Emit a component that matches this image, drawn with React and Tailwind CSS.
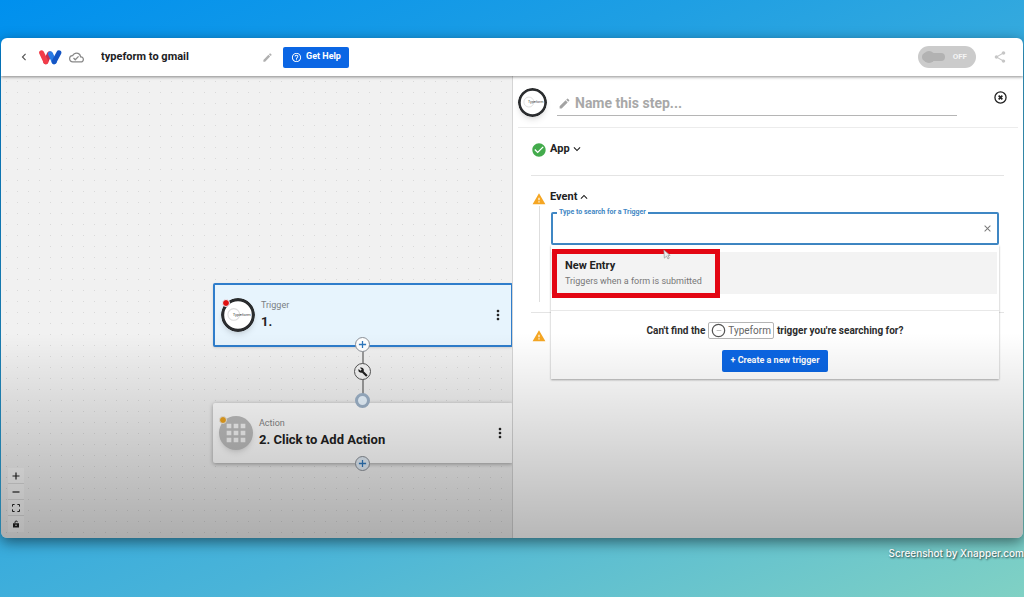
import React, { useState } from "react";
import {
  MdApps,
  MdBuild,
  MdCheckCircle,
  MdClose,
  MdEdit,
  MdHelpOutline,
  MdKeyboardArrowDown,
  MdKeyboardArrowLeft,
  MdKeyboardArrowUp,
  MdMoreVert,
  MdOutlineCloudDone,
  MdShare,
  MdWarning,
} from "react-icons/md";

const Logo = () => (
  <svg viewBox="0 0 44 28" className="h-[15px] w-[23px]" aria-label="Logo" role="img">
    <g fill="none" strokeWidth="9.5" strokeLinecap="round">
      <path d="M13 22L20 7" stroke="#c9304f" />
      <path d="M5 5L13 22" stroke="#f23c49" />
      <path d="M22 7L29 22" stroke="#2a7be4" />
      <path d="M29 22L38 5" stroke="#1455c4" />
    </g>
  </svg>
);

const TypeformMark = ({ className }) => (
  <svg viewBox="0 0 32 32" className={className} aria-hidden="true">
    <circle cx="16" cy="16" r="14.5" fill="#fff" stroke="#2a2c2e" strokeWidth="3" />
    <circle cx="12" cy="15.5" r="5.5" fill="none" stroke="#ddd" strokeWidth="1" />
    <text x="11" y="17" fontSize="4" fontFamily="Roboto, sans-serif" fill="#444">
      Typeform
    </text>
  </svg>
);

const AddHandle = ({ className, label }) => (
  <button
    type="button"
    aria-label={label}
    className={`absolute flex size-[15px] items-center justify-center rounded-full border border-[#8b9097] ${className}`}
  >
    <svg viewBox="0 0 10 10" className="size-[9px]">
      <path d="M5 1v8M1 5h8" stroke="#2f78bd" strokeWidth="1.4" />
    </svg>
  </button>
);

const Header = () => {
  const [title, setTitle] = useState("typeform to gmail");

  return (
    <header className="relative z-20 flex h-[38px] shrink-0 items-center bg-white pr-4 pl-4 shadow-[0_1px_3px_rgba(0,0,0,0.45)]">
      <button type="button" aria-label="Back" className="text-[#555]">
        <MdKeyboardArrowLeft size={14} />
      </button>
      <div className="ml-2">
        <Logo />
      </div>
      <MdOutlineCloudDone size={15} className="ml-[7px] text-[#888]" />
      <input
        type="text"
        aria-label="Workflow name"
        value={title}
        onChange={(e) => setTitle(e.target.value)}
        className="ml-[17px] w-[161px] text-[11px] font-bold text-[#1d1d1f] outline-none"
      />
      <button type="button" aria-label="Rename" className="text-[#b0b0b0]">
        <MdEdit size={11} />
      </button>
      <button
        type="button"
        className="ml-[10px] flex h-[21px] items-center gap-1 rounded-xs bg-[#0b66e4] px-2 text-[9px] font-bold text-white"
      >
        <MdHelpOutline size={11} />
        Get Help
      </button>

      <button
        type="button"
        role="switch"
        aria-checked="false"
        className="ml-auto flex h-[22px] w-[58px] items-center justify-between rounded-full bg-[#cbcbcb] pr-[9px] pl-1 text-[8px] font-bold text-[#f4f4f4]"
      >
        <span className="flex h-[8px] w-[23px] items-center rounded-full bg-[#b2b2b2]">
          <span className="ml-px size-[12px] rounded-full bg-[#b2b2b2]" />
        </span>
        OFF
      </button>
      <button type="button" aria-label="Share" className="ml-[17px] text-[#c6c6c6]">
        <MdShare size={14} />
      </button>
    </header>
  );
};

const Canvas = () => (
  <section className="relative flex-1 overflow-hidden bg-[#f1f1f1] bg-[radial-gradient(#d9d9d9_0.8px,transparent_1px)] bg-[length:11px_11px]">
    {/* Edge between the two steps */}
    <div className="absolute top-[270px] left-[361px] h-[56px] w-[2px] bg-[#999]" />

    {/* Trigger node */}
    <article className="absolute top-[207px] left-[212px] flex h-[64px] w-[300px] items-center rounded-xs border-2 border-[#2f7dcb] bg-[#e7f4fd] pr-[5px] pl-[6px] shadow-sm">
      <div className="relative">
        <TypeformMark className="size-[34px] rounded-full shadow-md" />
        <span className="absolute top-px left-px size-[8px] rounded-full border border-[#e7f4fd] bg-[#e01010]" />
      </div>
      <div className="ml-[6px] flex-1">
        <p className="text-[9px] leading-[14px] text-[#7a7f83]">Trigger</p>
        <h2 className="text-[13px] leading-[20px] font-bold text-[#222]">1.</h2>
      </div>
      <button type="button" aria-label="Trigger options" className="text-[#222]">
        <MdMoreVert size={16} />
      </button>
    </article>

    {/* Action node */}
    <article className="absolute top-[327px] left-[212px] flex h-[60px] w-[300px] items-center rounded-xs bg-white pr-[5px] pl-[6px] shadow-[0_1px_4px_rgba(0,0,0,0.35)]">
      <div className="relative flex size-[34px] items-center justify-center rounded-full bg-[#bdbdbd] text-[#f4f4f4] shadow-md">
        <MdApps size={28} />
        <span className="absolute top-0 left-0 size-[8px] rounded-full border border-[#eee] bg-[#eda41f]" />
      </div>
      <div className="ml-[6px] flex-1">
        <p className="text-[9px] leading-[14px] text-[#858585]">Action</p>
        <h2 className="text-[13px] leading-[20px] font-bold text-[#222]">2. Click to Add Action</h2>
      </div>
      <button type="button" aria-label="Action options" className="text-[#222]">
        <MdMoreVert size={16} />
      </button>
    </article>

    <AddHandle label="Add step after trigger" className="top-[261px] left-[354px] bg-white" />
    <div className="absolute top-[287px] left-[353px] flex size-[17px] items-center justify-center rounded-full border border-[#555] bg-[#f3f3f3] text-[#222]">
      <MdBuild size={10} />
    </div>
    <span className="absolute top-[317px] left-[354px] size-[15px] rounded-full border-[3px] border-[#9db2c8] bg-[#e9f5ff]" />
    <AddHandle label="Add step after action" className="top-[380px] left-[354px] bg-[#e3eef8]" />

    {/* Zoom controls */}
    <div className="absolute bottom-[6px] left-[7px] flex flex-col divide-y divide-[#ddd] bg-[#f8f8f8] text-[#222]">
      <button type="button" aria-label="Zoom in" className="flex size-[16px] items-center justify-center">
        <svg viewBox="0 0 8 8" className="size-[8px]">
          <path d="M4 0.5v7M0.5 4h7" stroke="currentColor" strokeWidth="1.2" />
        </svg>
      </button>
      <button type="button" aria-label="Zoom out" className="flex size-[16px] items-center justify-center">
        <svg viewBox="0 0 8 8" className="size-[8px]">
          <path d="M0.5 4h7" stroke="currentColor" strokeWidth="1.2" />
        </svg>
      </button>
      <button type="button" aria-label="Fit view" className="flex size-[16px] items-center justify-center">
        <svg viewBox="0 0 8 8" className="size-[8px]" fill="none" stroke="currentColor">
          <path d="M0.5 2.6v-2.1h2.1M5.4 0.5h2.1v2.1M7.5 5.4v2.1h-2.1M2.6 7.5h-2.1v-2.1" />
        </svg>
      </button>
      <button type="button" aria-label="Lock view" className="flex size-[16px] items-center justify-center">
        <svg viewBox="0 0 8 8" className="size-[8px]">
          <path d="M1 3.2h6v4.3h-6z" fill="currentColor" />
          <path d="M3 3.2v-1a1.2 1.2 0 0 1 2.4 0" fill="none" stroke="currentColor" />
          <circle cx="4" cy="5.3" r="0.8" fill="#eee" />
        </svg>
      </button>
    </div>
  </section>
);

const TriggerSearch = () => {
  const [query, setQuery] = useState("");

  return (
    <div className="relative">
      <fieldset className="h-[36px] rounded-xs border-2 border-[#3f87c4] px-[4px]">
        <legend className="px-[2px] text-[7px] leading-[7px] font-bold text-[#3f87c4]">
          <label htmlFor="trigger-search">Type to search for a Trigger</label>
        </legend>
        <div className="flex h-[24px] items-center">
          <input
            id="trigger-search"
            type="text"
            value={query}
            onChange={(e) => setQuery(e.target.value)}
            className="min-w-0 flex-1 pl-1 text-[11px] outline-none"
          />
          <button type="button" aria-label="Clear" className="text-[#777]" onClick={() => setQuery("")}>
            <MdClose size={11} />
          </button>
        </div>
      </fieldset>

      {/* Results menu */}
      <div className="absolute top-full right-0 left-0 z-10 bg-white pt-[7px] shadow-[0_1px_2px_rgba(0,0,0,0.35)]">
        <button
          type="button"
          className="flex h-[42px] w-[calc(100%-2px)] flex-col justify-center bg-[#f3f3f3] pl-[14px] text-left"
        >
          <span className="text-[11px] leading-[16px] font-bold text-[#222]">New Entry</span>
          <span className="text-[9px] leading-[14px] text-[#777]">Triggers when a form is submitted</span>
        </button>
        {/* Highlight frame and pointer */}
        <div className="pointer-events-none absolute top-[4px] left-px h-[49px] w-[168px] border-[5px] border-[#e30613]" />
        <svg viewBox="0 0 10 12" className="pointer-events-none absolute top-[4px] left-[112px] h-[11px] w-[9px]">
          <path d="M1 1l7 6H5.5L7 10 5.5 11 4 7.8 1.5 10z" fill="#eee" stroke="#999" strokeWidth="0.8" />
        </svg>
        <div className="mt-[16px] flex flex-col items-center border-t border-[#e8e8e8] pt-[11px] pb-[7px]">
          <p className="flex items-center gap-[3px] text-[10px] font-bold whitespace-nowrap text-[#2c2c2c]">
            Can't find the
            <span className="flex h-[17px] items-center gap-[2px] rounded-xs border border-[#b5b5b5] px-[2px] font-normal text-[#666]">
              <svg viewBox="0 0 16 16" className="size-[15px]">
                <circle cx="8" cy="8" r="6.6" fill="#fff" stroke="#555" strokeWidth="1.3" />
                <path d="M6 8h5" stroke="#aaa" strokeWidth="0.8" />
              </svg>
              Typeform
            </span>
            trigger you're searching for?
          </p>
          <button type="button" className="mt-[11px] h-[22px] rounded-xs bg-[#0b66e4] px-2 text-[9px] font-bold text-white">
            + Create a new trigger
          </button>
        </div>
      </div>
    </div>
  );
};

const StepPanel = () => {
  const [stepName, setStepName] = useState("");

  return (
    <aside className="w-1/2 border-l border-[#d5d5d5] bg-white">
      {/* Step name */}
      <div className="mx-[5px] flex h-[52px] items-start border-b border-[#ececec] pt-[12px]">
        <TypeformMark className="size-[29px] shrink-0 rounded-full shadow-md" />
        <div className="ml-[10px] flex h-[28px] flex-1 items-center border-b border-[#b5b5b5] pt-[4px] pl-px text-[#a3a3a3]">
          <MdEdit size={13} />
          <input
            type="text"
            aria-label="Step name"
            placeholder="Name this step..."
            value={stepName}
            onChange={(e) => setStepName(e.target.value)}
            className="ml-[4px] min-w-0 flex-1 text-[14px] font-bold text-[#222] outline-none placeholder:text-[#a8a8a8]"
          />
        </div>
        <button type="button" aria-label="Close panel" className="mr-[11px] ml-[37px] pt-[3px]">
          <svg viewBox="0 0 14 14" className="size-[13px]" fill="none" stroke="#222">
            <circle cx="7" cy="7" r="6" strokeWidth="1.4" />
            <path d="M5 5l4 4M9 5L5 9" strokeWidth="1.8" />
          </svg>
        </button>
      </div>

      <div className="mr-[19px] ml-[18px]">
        <div className="flex h-[48px] items-start border-b border-[#e4e4e4] pt-[13px]">
          <MdCheckCircle size={16} className="mt-px text-[#43ab4c]" />
          <button type="button" className="ml-[3px] flex items-center text-[11px] leading-[16px] font-bold text-[#222]">
            App
            <MdKeyboardArrowDown size={14} />
          </button>
        </div>

        <div className="h-[137px] border-b border-[#e4e4e4] pt-[13px]">
          <div className="flex items-start">
            <MdWarning size={14} className="mx-px mt-[3px] text-[#f5a623]" />
            <button type="button" className="ml-[3px] flex items-center text-[11px] leading-[16px] font-bold text-[#222]">
              Event
              <MdKeyboardArrowUp size={14} />
            </button>
          </div>
          <div className="ml-[8px] h-[96px] border-l border-[#dedede] pr-[5px] pl-[11px]">
            <div className="pt-[3px]">
              <TriggerSearch />
            </div>
          </div>
        </div>

        <div className="pt-[16px]">
          <MdWarning size={14} className="mx-px text-[#f5a623]" />
        </div>
      </div>
    </aside>
  );
};

const App = () => {
  return (
    <div className="flex min-h-screen flex-col bg-[linear-gradient(155deg,#0090ee_0%,#1f9fe3_30%,#4ab4d8_65%,#80d1c4_100%)] pt-[38px] font-['Roboto',sans-serif]">
      <main className="relative mx-px flex flex-1 flex-col overflow-hidden rounded-md shadow-[0_4px_14px_rgba(0,0,0,0.5)]">
        <Header />
        <div className="flex flex-1">
          <Canvas />
          <StepPanel />
        </div>
        {/* Shade towards the bottom of the window */}
        <div className="pointer-events-none absolute inset-x-0 bottom-0 z-30 h-[205px] bg-linear-to-b from-transparent to-black/28" />
      </main>
      <footer className="flex h-[59px] justify-end overflow-hidden pt-[7px] font-['Inter',sans-serif] text-[10px] leading-[16px] font-medium whitespace-nowrap text-white [text-shadow:1px_1px_2px_rgba(0,0,0,0.7)]">
        Screenshot by Xnapper.com
      </footer>
    </div>
  );
};

export default App;
